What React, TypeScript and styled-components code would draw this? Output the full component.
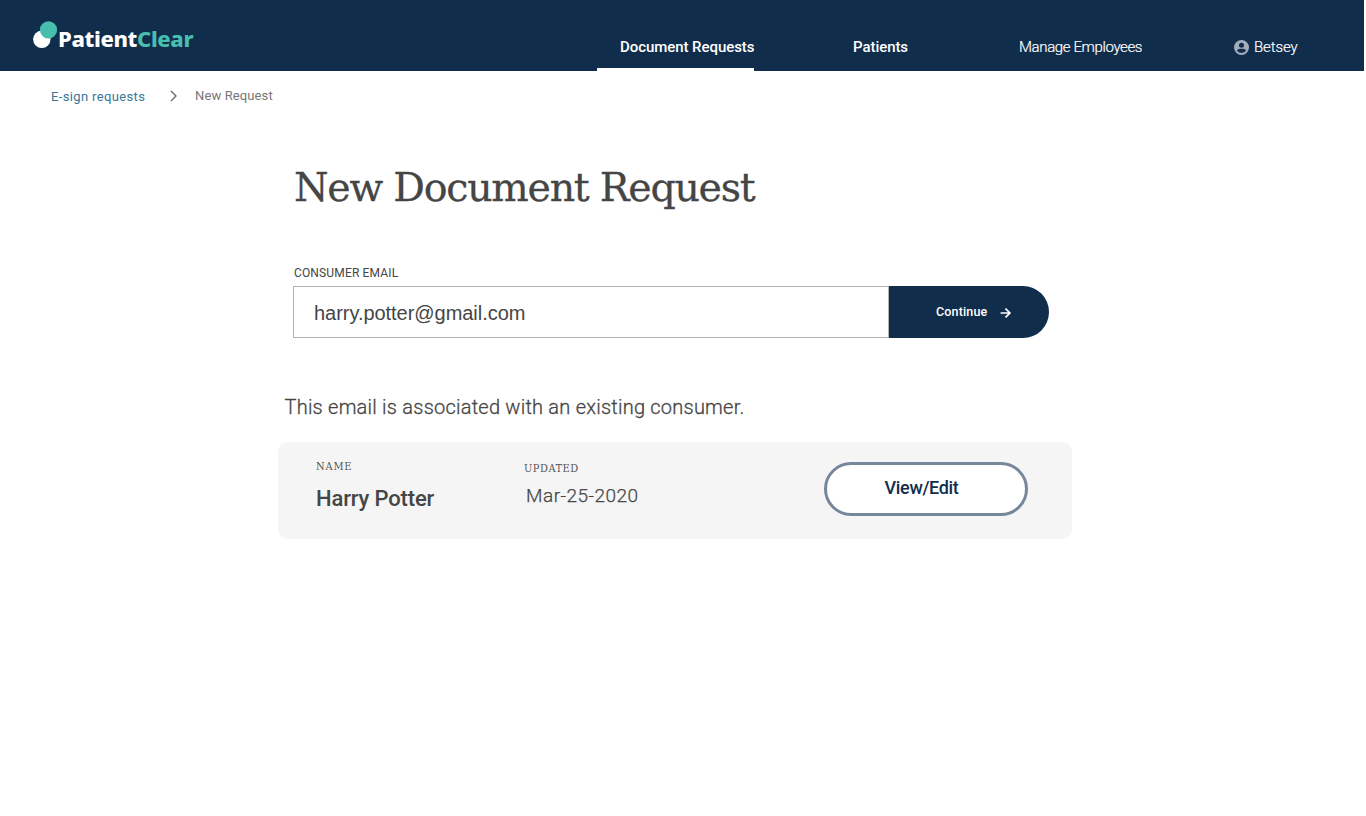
import React from "react";
import styled, { createGlobalStyle } from "styled-components";

const navy = "#112d4c";
const teal = "#48bfae";
const ink = "#454545";
const serif = `"DejaVu Serif Condensed", "DejaVu Serif", serif`;

const GlobalStyle = createGlobalStyle`
  * { box-sizing: border-box; }
  body { margin: 0; background: #fff; color: ${ink}; font-family: Roboto, sans-serif; overflow: hidden; }
  h1, p { margin: 0; font-weight: 400; }
  button, input { font-family: inherit; margin: 0; }
  a { text-decoration: none; color: inherit; }
`;

const Page = styled.div`
  width: 1364px;
  min-height: 816px;
`;

const Header = styled.header`
  display: flex;
  height: 71px;
  padding-left: 33px;
  background: ${navy};
`;

const Logo = styled.a`
  display: flex;
  align-items: flex-start;
  width: 564px;
  padding-top: 21px;
`;

const LogoText = styled.span`
  margin-top: 5px;
  margin-left: -1px;
  font: 800 22px/24px "Noto Sans", sans-serif;
  letter-spacing: -0.35px;
  color: #fff;
`;

const LogoAccent = styled.span`
  color: ${teal};
`;

const Nav = styled.nav`
  display: grid;
  grid-template-columns: 256px 166px 215px 130px;
`;

const NavItem = styled.a<{ $active?: boolean; $light?: boolean }>`
  display: flex;
  gap: 5px;
  width: ${(p) => (p.$active ? "157px" : "auto")};
  padding: 37px 0 0 ${(p) => (p.$active ? "23px" : "0")};
  border-bottom: ${(p) => (p.$active ? "3px solid #fff" : "0")};
  font-size: 15px;
  line-height: 20px;
  font-weight: ${(p) => (p.$light ? 300 : 500)};
  letter-spacing: ${(p) => (p.$light ? "-0.37px" : "-0.06px")};
  -webkit-text-stroke: ${(p) => (p.$light ? "0.2px" : "0")};
  white-space: nowrap;
  color: #fff;
`;

const UserIcon = styled.svg`
  margin-top: 3px;
  flex: none;
`;

const UserName = styled.span`
  letter-spacing: -0.1px;
`;

const Breadcrumbs = styled.nav`
  display: flex;
  align-items: flex-start;
  height: 92px;
  padding: 16px 0 0 51px;
  font-size: 13px;
  line-height: 18px;
`;

const CrumbLink = styled.a`
  width: 118.5px;
  margin-top: 1px;
  letter-spacing: 0.36px;
  color: #36779a;
`;

const CrumbCurrent = styled.span`
  margin-left: 17.5px;
  letter-spacing: 0.12px;
  color: #777;
`;

const Chevron = styled.svg`
  margin-top: 3px;
`;

const Content = styled.main`
  width: 794px;
  margin-left: 278px;
`;

const Title = styled.h1`
  padding-left: 16px;
  font-family: "DejaVu Serif", serif;
  font-size: 39.5px;
  line-height: 48px;
  letter-spacing: -1.25px;
  -webkit-text-stroke: 0.3px;
`;

const EmailForm = styled.form`
  display: flex;
  flex-direction: column;
  margin: 54px 0 0 15px;
`;

const Label = styled.label`
  margin: 0 0 5px 1px;
  font-size: 12px;
  line-height: 16px;
  letter-spacing: 0.15px;
`;

const Field = styled.div`
  display: flex;
  width: 756px;
  height: 52px;
`;

const EmailInput = styled.input`
  flex: 1;
  min-width: 0;
  padding: 2px 20px 0;
  border: 1px solid #b4b4b4;
  border-radius: 0;
  outline: 0;
  background: #fff;
  color: ${ink};
  && { font-family: "Liberation Sans", sans-serif; }
  font-size: 20px;
  letter-spacing: -0.04px;
`;

const ContinueButton = styled.button`
  display: flex;
  align-items: center;
  gap: 12.5px;
  width: 160px;
  padding: 0 0 1px 47px;
  border: 0;
  border-radius: 0 26px 26px 0;
  background: ${navy};
  color: #fff;
  font-size: 12.5px;
  font-weight: 500;
  letter-spacing: 0.15px;
`;

const Message = styled.p`
  margin: 57px 0 23px 6.5px;
  font-size: 20px;
  line-height: 24px;
  font-weight: 300;
  letter-spacing: 0.23px;
  -webkit-text-stroke: 0.3px;
`;

const Card = styled.section`
  display: flex;
  align-items: flex-start;
  height: 97px;
  padding-left: 38px;
  border-radius: 10px;
  background: #f5f5f5;
`;

const Column = styled.div<{ $width: number; $top: number }>`
  display: flex;
  flex-direction: column;
  width: ${(p) => p.$width}px;
  padding-top: ${(p) => p.$top}px;
`;

const Caption = styled.span<{ $spacing: number }>`
  font-family: ${serif};
  font-size: 11px;
  line-height: 14px;
  letter-spacing: ${(p) => p.$spacing}px;
  color: #555;
`;

const Name = styled.span`
  margin: 12px 0 0 0;
  font-size: 22px;
  line-height: 26px;
  font-weight: 500;
  letter-spacing: -0.16px;
`;

const DateValue = styled.span`
  margin: 8px 0 0 2px;
  font-size: 19px;
  line-height: 24px;
  font-weight: 300;
  letter-spacing: 0.5px;
  -webkit-text-stroke: 0.25px;
`;

const EditButton = styled.button`
  width: 204px;
  height: 54px;
  margin-top: 20px;
  padding: 0 9px 3px 0;
  border: 3px solid #76879c;
  border-radius: 27px;
  background: #fff;
  color: ${navy};
  font-size: 18px;
  font-weight: 500;
  letter-spacing: -0.35px;
`;

export default function App() {
  return (
    <>
      <GlobalStyle />
      <Page>
        <Header>
          <Logo>
            <svg width="26" height="28" viewBox="0 0 26 28">
              <circle cx="8.8" cy="18.3" r="8.7" fill="#fff" />
              <circle cx="15.5" cy="8.8" r="8.6" fill={teal} />
            </svg>
            <LogoText>
              Patient<LogoAccent>Clear</LogoAccent>
            </LogoText>
          </Logo>
          <Nav>
            <NavItem $active>Document Requests</NavItem>
            <NavItem>Patients</NavItem>
            <NavItem $light>Manage Employees</NavItem>
            <NavItem $light>
              <UserIcon width="15" height="15" viewBox="0 0 16 16">
                <circle cx="8" cy="8" r="8" fill="#a3acba" />
                <circle cx="8" cy="5.5" r="2.7" fill={navy} />
                <path d="M3.1 10.9c1-1.3 3-1.7 4.9-1.7s3.9.4 4.9 1.7c-.9 1.7-2.700 2.800-4.900 2.800s-4-1.100-4.900-2.800z" fill={navy} />
              </UserIcon>
              <UserName>Betsey</UserName>
            </NavItem>
          </Nav>
        </Header>
        <Breadcrumbs>
          <CrumbLink>E-sign requests</CrumbLink>
          <Chevron width="8" height="12" viewBox="0 0 8 12" fill="none" stroke="#666" strokeWidth="1.3">
            <path d="M1 1l5 5-5 5" />
          </Chevron>
          <CrumbCurrent>New Request</CrumbCurrent>
        </Breadcrumbs>
        <Content>
          <Title>New Document Request</Title>
          <EmailForm>
            <Label htmlFor="email">CONSUMER EMAIL</Label>
            <Field>
              <EmailInput id="email" defaultValue="harry.potter@gmail.com" />
              <ContinueButton type="button">
                Continue
                <svg width="12" height="12" viewBox="0 0 12 12" fill="none" stroke="#fff" strokeWidth="1.7">
                  <path d="M.6 7h9M5.500 2.600l4.400 4.400-4.400 4.400" />
                </svg>
              </ContinueButton>
            </Field>
          </EmailForm>
          <Message>This email is associated with an existing consumer.</Message>
          <Card>
            <Column $width={208} $top={18}>
              <Caption $spacing={0.8}>NAME</Caption>
              <Name>Harry Potter</Name>
            </Column>
            <Column $width={300} $top={20}>
              <Caption $spacing={0.5}>UPDATED</Caption>
              <DateValue>Mar-25-2020</DateValue>
            </Column>
            <EditButton>View/Edit</EditButton>
          </Card>
        </Content>
      </Page>
    </>
  );
}
